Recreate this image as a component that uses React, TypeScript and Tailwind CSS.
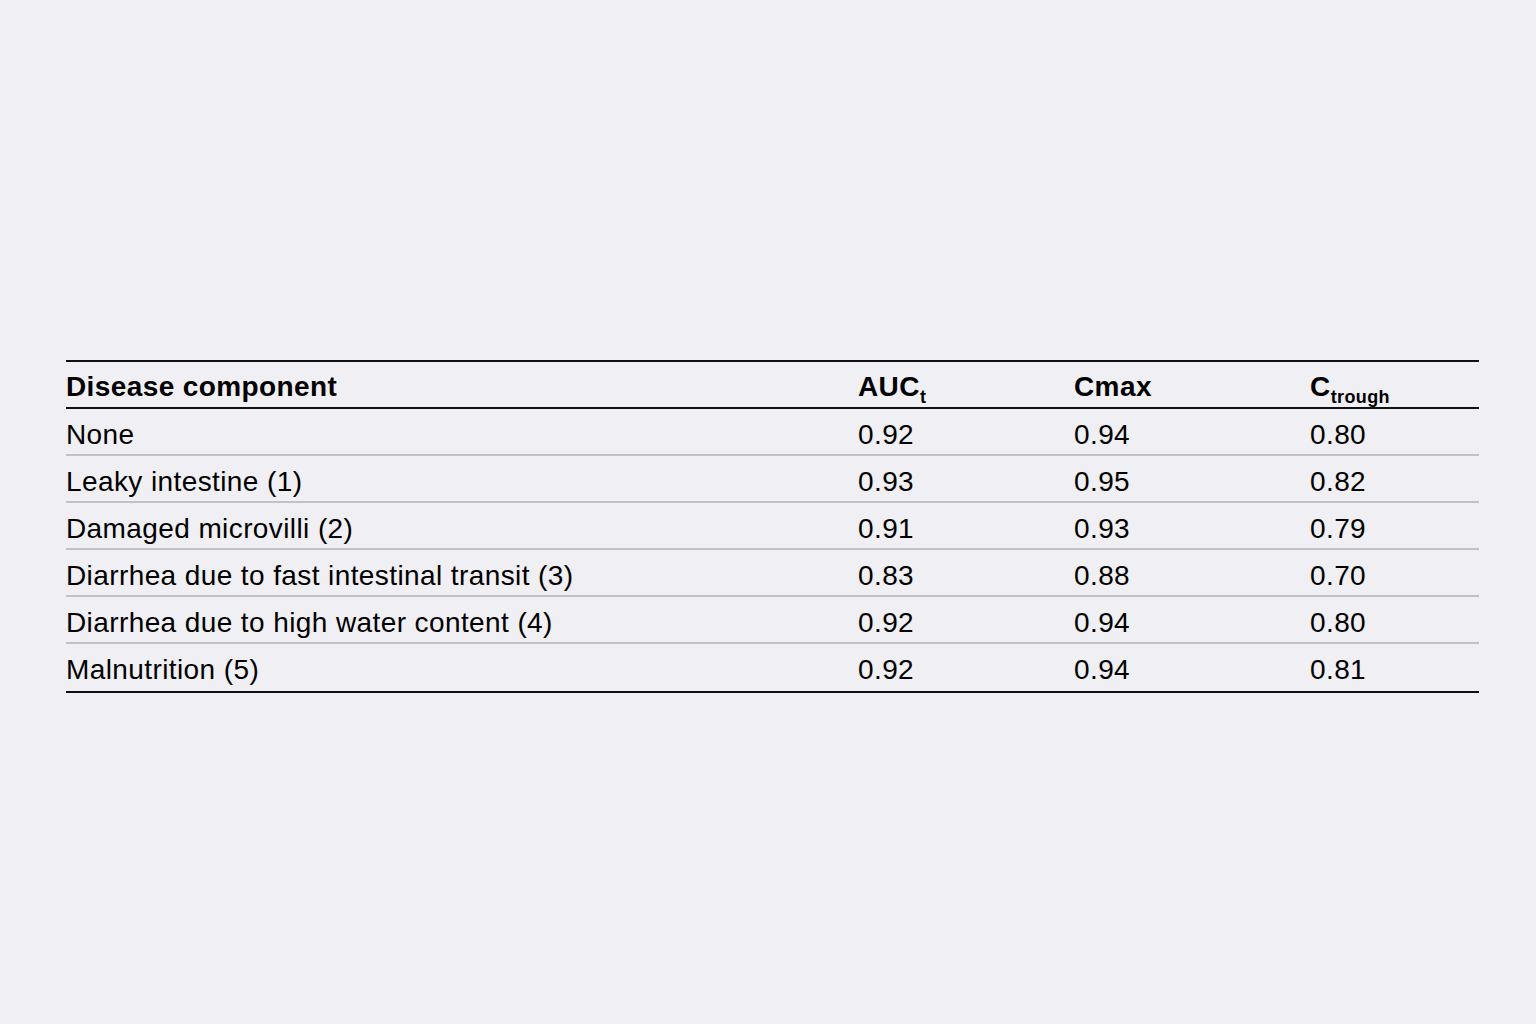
import React from "react";

const rows: [string, string, string, string][] = [
  ["None", "0.92", "0.94", "0.80"],
  ["Leaky intestine (1)", "0.93", "0.95", "0.82"],
  ["Damaged microvilli (2)", "0.91", "0.93", "0.79"],
  ["Diarrhea due to fast intestinal transit (3)", "0.83", "0.88", "0.70"],
  ["Diarrhea due to high water content (4)", "0.92", "0.94", "0.80"],
  ["Malnutrition (5)", "0.92", "0.94", "0.81"],
];

export default function App() {
  return (
    <div
      className="w-[1536px] h-[1024px] bg-[#f0eff4] pt-[360px] pl-[66px]"
      style={{ fontFamily: '"Liberation Sans", Arial, sans-serif' }}
    >
      <div className="w-[1413px] border-t-2 border-b-2 border-[#111] text-[28px] leading-[32px] tracking-[0.4px] text-black">
        <div className="grid grid-cols-[792px_216px_236px_169px] h-[47px] pt-[9px] border-b-2 border-[#111] font-bold">
          <div>Disease component</div>
          <div>
            AUC<span className="relative top-[7px] text-[18px]">t</span>
          </div>
          <div>Cmax</div>
          <div>
            C<span className="relative top-[7px] text-[18px]">trough</span>
          </div>
        </div>
        {rows.map((r, i) => (
          <div
            key={i}
            className={
              i < rows.length - 1
                ? "grid grid-cols-[792px_216px_236px_169px] h-[47px] pt-[10px] border-b-2 border-[#c2c2c4]"
                : "grid grid-cols-[792px_216px_236px_169px] h-[47px] pt-[10px]"
            }
          >
            <div>{r[0]}</div>
            <div>{r[1]}</div>
            <div>{r[2]}</div>
            <div>{r[3]}</div>
          </div>
        ))}
      </div>
    </div>
  );
}
